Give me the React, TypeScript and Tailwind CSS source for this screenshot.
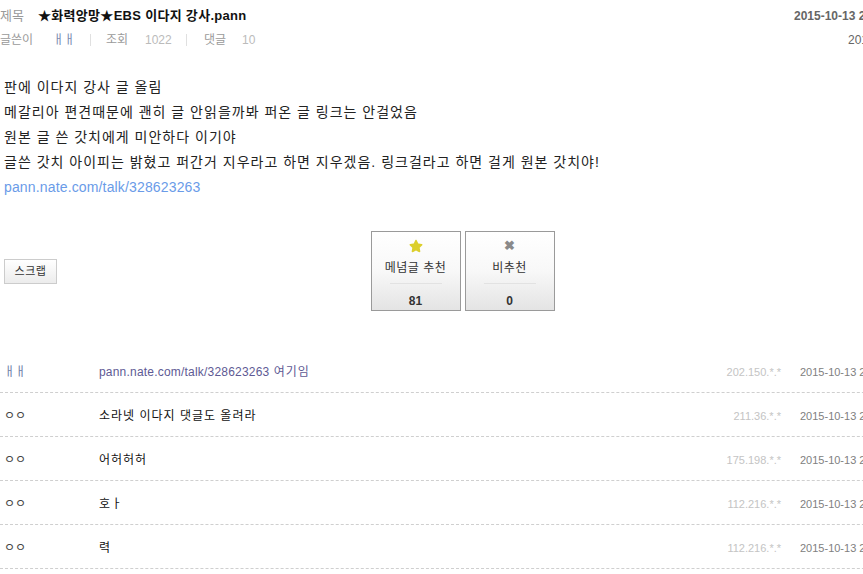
import { FaStar } from "react-icons/fa";

type Reply = {
  name: string;
  text: string;
  ip: string;
  link?: string;
};

const replies: Reply[] = [
  { name: "ㅐㅐ", link: "pann.nate.com/talk/328623263", text: " 여기임", ip: "202.150.*.*" },
  { name: "ㅇㅇ", text: "소라넷 이다지 댓글도 올려라", ip: "211.36.*.*" },
  { name: "ㅇㅇ", text: "어허허허", ip: "175.198.*.*" },
  { name: "ㅇㅇ", text: "호ㅏ", ip: "112.216.*.*" },
  { name: "ㅇㅇ", text: "력", ip: "112.216.*.*" },
];

const font = { fontFamily: '"Liberation Sans", "Noto Sans CJK KR", sans-serif' };

// vote box (recommend / not recommend)
const VoteBox = ({ label, count, good }: { label: string; count: number; good?: boolean }) => (
  <div className="w-[90px] h-[80px] border border-[#9a9a9a] bg-gradient-to-b from-white via-[#f8f8f8] to-[#e4e4e4] flex flex-col items-center pt-[8px]">
    <div className="h-[12px] flex items-center justify-center">
      {good ? (
        <FaStar className="text-[#dccf2c] w-[14px] h-[14px]" />
      ) : (
        <span className="text-[#8a8a8a] text-[13px] leading-[12px] font-bold">✖</span>
      )}
    </div>
    <div className="mt-[8px] h-[16px] leading-[16px] text-[12px] text-[#333] tracking-[0.5px]">{label}</div>
    <div className="mt-[7px] w-[52px] h-px bg-[#e2e2e2]" />
    <div className="mt-[9px] h-[16px] leading-[16px] text-[12px] font-bold text-[#333]">{count}</div>
  </div>
);

const App = () => {
  return (
    <div className="w-[863px] h-[574px] overflow-hidden bg-white" style={font}>
      <div className="w-[925px]">
        {/* title row */}
        <div className="flex items-center h-[32px]">
          <span className="w-[38px] text-[13px] text-[#9a9a9a]">제목</span>
          <h1 className="flex-1 text-[13px] font-bold text-[#111] tracking-[0.3px]">★화력앙망★EBS 이다지 강사.pann</h1>
          <span className="w-[131px] text-[12px] font-bold text-[#666] whitespace-nowrap">2015-10-13 21:22</span>
        </div>

        {/* writer / views / replies */}
        <div className="flex items-center h-[16px] text-[12px]">
          <span className="w-[53px] text-[#9a9a9a]">글쓴이</span>
          <span className="w-[37px] text-[#7b8bb0]">ㅐㅐ</span>
          <span className="w-px h-[12px] bg-[#e0e0e0]" />
          <span className="ml-[15px] w-[39px] text-[#9a9a9a]">조회</span>
          <span className="w-[41px] text-[#bbbbbb]">1022</span>
          <span className="w-px h-[12px] bg-[#e0e0e0]" />
          <span className="ml-[17px] w-[38px] text-[#9a9a9a]">댓글</span>
          <span className="text-[#bbbbbb]">10</span>
          <span className="ml-auto w-[77px] text-[#666] whitespace-nowrap">2015-10-13 21:22</span>
        </div>

        {/* body */}
        <div className="mt-[27px] pl-[4px] text-[14px] leading-[25px] text-[#222]">
          <p className="tracking-[1px]">판에 이다지 강사 글 올림</p>
          <p className="tracking-[1px]">메갈리아 편견때문에 괜히 글 안읽을까봐 퍼온 글 링크는 안걸었음</p>
          <p className="tracking-[1px]">원본 글 쓴 갓치에게 미안하다 이기야</p>
          <p className="tracking-[1px]">글쓴 갓치 아이피는 밝혔고 퍼간거 지우라고 하면 지우겠음. 링크걸라고 하면 걸게 원본 갓치야!</p>
          <p className="text-[#6a9be8] tracking-[0.15px]">pann.nate.com/talk/328623263</p>
        </div>

        {/* scrap + vote */}
        <div className="mt-[31px] grid grid-cols-[1fr_auto_1fr] items-center">
          <div>
            <button className="ml-[4px] w-[53px] h-[25px] border border-[#cccccc] bg-gradient-to-b from-white to-[#ececec] text-[11px] text-[#333] tracking-[0.5px]">
              스크랩
            </button>
          </div>
          <div className="flex gap-[4px]">
            <VoteBox label="메념글 추천" count={81} good />
            <VoteBox label="비추천" count={0} />
          </div>
          <div />
        </div>

        {/* replies */}
        <div className="mt-[38px]">
          {replies.map((r, i) => (
            <div key={i} className="flex items-center h-[44px] pt-[3px] border-b border-dashed border-[#cfcfcf] text-[12px]">
              <span className={`w-[99px] pl-[4px] ${i === 0 ? "text-[#6f7fa8]" : "text-[#444]"}`}>{r.name}</span>
              <span className="w-[582px] text-[#111] whitespace-nowrap">
                {r.link && <span className="text-[#5e5a94] tracking-[0.2px]">{r.link}</span>}
                <span className={r.link ? "text-[#5e5a94] tracking-[1px]" : "tracking-[1px]"}>{r.text}</span>
              </span>
              <span className="w-[100px] text-right text-[11px] text-[#c4c4c4]">{r.ip}</span>
              <span className="ml-[19px] text-[11px] text-[#808080] whitespace-nowrap">2015-10-13 21:25</span>
            </div>
          ))}
        </div>
      </div>
    </div>
  );
};

export default App;
